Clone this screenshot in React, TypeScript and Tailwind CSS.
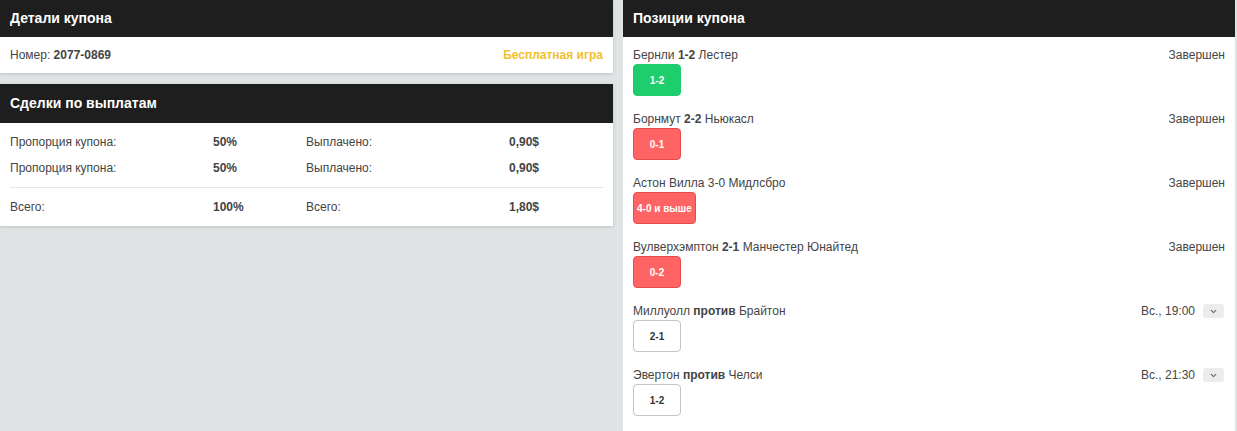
import { ChevronDown } from 'lucide-react';

type Pick = { label: string; tone: 'win' | 'lose' | 'open' };
type Position = {
  home: string;
  score: string;
  away: string;
  status: string;
  pick: Pick;
  live?: boolean;
  plainScore?: boolean;
};

const POSITIONS: Position[] = [
  { home: 'Бернли', score: '1-2', away: 'Лестер', status: 'Завершен', pick: { label: '1-2', tone: 'win' } },
  { home: 'Борнмут', score: '2-2', away: 'Ньюкасл', status: 'Завершен', pick: { label: '0-1', tone: 'lose' } },
  { home: 'Астон Вилла', score: '3-0', away: 'Мидлсбро', status: 'Завершен', pick: { label: '4-0 и выше', tone: 'lose' }, plainScore: true },
  { home: 'Вулверхэмптон', score: '2-1', away: 'Манчестер Юнайтед', status: 'Завершен', pick: { label: '0-2', tone: 'lose' } },
  { home: 'Миллуолл', score: 'против', away: 'Брайтон', status: 'Вс., 19:00', pick: { label: '2-1', tone: 'open' }, live: true },
  { home: 'Эвертон', score: 'против', away: 'Челси', status: 'Вс., 21:30', pick: { label: '1-2', tone: 'open' }, live: true },
];

const toneClass = {
  win: 'bg-[#1ecd6b] border-[#1ecd6b] text-white',
  lose: 'bg-[#ff6464] border-[#e84a4a] text-white',
  open: 'bg-white border-[#c4c4c4] text-[#333]',
};

function PanelHeader({ title, tall }: { title: string; tall?: boolean }) {
  return (
    <div className={`bg-[#1e1e1e] flex items-center px-[10px] ${tall ? 'h-[39px]' : 'h-[37px]'}`}>
      <h2 className="text-white text-[14px] font-bold">{title}</h2>
    </div>
  );
}

function PayoutRow({ label, pct, paid }: { label: string; pct: string; paid: string }) {
  return (
    <div className="grid grid-cols-[203px_93px_203px_1fr] h-[26px] items-center">
      <span>{label}</span>
      <span className="font-bold">{pct}</span>
      <span>{label === 'Всего:' ? 'Всего:' : 'Выплачено:'}</span>
      <span className="font-bold">{paid}</span>
    </div>
  );
}

function PositionItem({ p }: { p: Position }) {
  return (
    <div className="flex flex-col">
      <div className="flex items-center justify-between h-[16px]">
        <span>
          {p.home} <span className={p.plainScore ? '' : 'font-bold'}>{p.score}</span> {p.away}
        </span>
        <div className="flex items-center gap-2">
          <span>{p.status}</span>
          {p.live && (
            <button className="w-[21px] h-[14px] rounded-[3px] bg-[#ececec] flex items-center justify-center mr-[1px]">
              <ChevronDown size={9} strokeWidth={3} className="text-[#666]" />
            </button>
          )}
        </div>
      </div>
      <div className="mt-[1px]">
        <span
          className={`inline-flex items-center justify-center h-[32px] min-w-[48px] px-[3px] rounded-[4px] border text-[10px] font-bold ${toneClass[p.pick.tone]}`}
        >
          {p.pick.label}
        </span>
      </div>
    </div>
  );
}

export default function App() {
  return (
    <div className="min-h-[431px] bg-[#dfe3e3] font-['Liberation_Sans',Arial,sans-serif] text-[12px] text-[#444] flex gap-[10px] pr-[2px]">
      <div className="w-[613px] flex flex-col gap-[11px]">
        <section className="bg-white shadow-[0_1px_3px_rgba(0,0,0,0.15)]">
          <PanelHeader title="Детали купона" />
          <div className="h-[36px] px-[10px] flex items-center justify-between">
            <span>
              Номер: <b className="font-bold">2077-0869</b>
            </span>
            <span className="text-[#f2c12e] font-bold">Бесплатная игра</span>
          </div>
        </section>

        <section className="bg-white shadow-[0_1px_3px_rgba(0,0,0,0.15)]">
          <PanelHeader title="Сделки по выплатам" tall />
          <div className="px-[10px] pt-[6px] pb-[6px]">
            <PayoutRow label="Пропорция купона:" pct="50%" paid="0,90$" />
            <PayoutRow label="Пропорция купона:" pct="50%" paid="0,90$" />
            <div className="border-t border-[#e6e6e6] my-[6px]" />
            <PayoutRow label="Всего:" pct="100%" paid="1,80$" />
          </div>
        </section>
      </div>

      <section className="flex-1 bg-white self-start min-h-[431px]">
        <PanelHeader title="Позиции купона" />
        <div className="px-[10px] pt-[10px] pb-[16px] flex flex-col gap-[15px]">
          {POSITIONS.map((p, i) => (
            <PositionItem key={i} p={p} />
          ))}
        </div>
      </section>
    </div>
  );
}
